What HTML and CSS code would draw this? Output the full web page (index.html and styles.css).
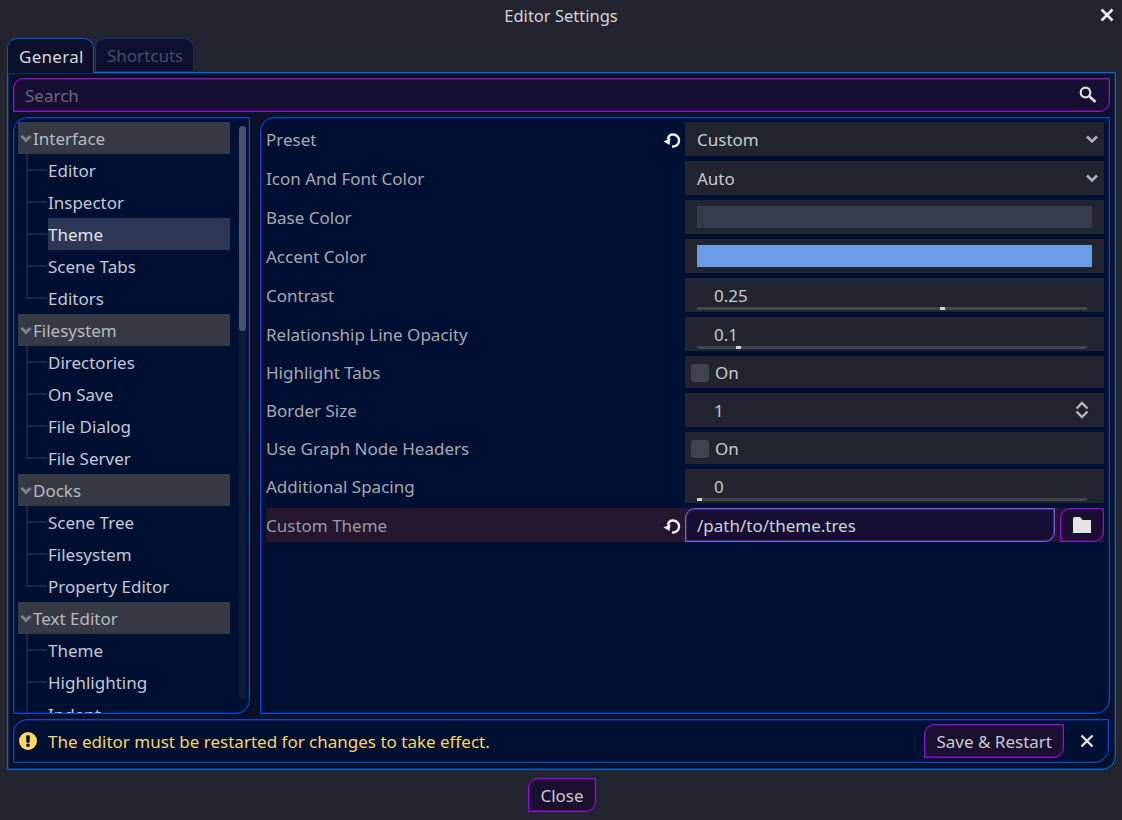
FILE: index.html
```html
<!DOCTYPE html>
<html lang="en">
<head>
  <meta charset="UTF-8">
  <meta name="viewport" content="width=device-width, initial-scale=1.0">
  <title>Editor Settings</title>
  <link rel="stylesheet" href="styles.css">
</head>
<body>
  <div class="titlebar">
    <span>Editor Settings</span>
    <svg class="title-close" width="16" height="16" viewBox="0 0 16 16"><path d="M2.5 2.5l11 11M13.5 2.5l-11 11" stroke="#f0f0f2" stroke-width="2.6" fill="none"/></svg>
  </div>

  <div class="tabs">
    <div class="tab active">General</div>
    <div class="tab">Shortcuts</div>
  </div>

  <div class="panel">
    <div class="search">
      <span>Search</span>
      <svg width="18" height="18" viewBox="0 0 18 18"><circle cx="6.500" cy="6.500" r="4.800" stroke="#e0e0e4" stroke-width="2.200" fill="none"/><path d="M10 10l6.500 6" stroke="#e0e0e4" stroke-width="2.600" fill="none"/></svg>
    </div>

    <div class="split">
      <div class="tree">
        <div class="tree-inner">
          <div class="group"><svg class="arrow" width="12" height="12" viewBox="0 0 12 12"><path d="M1.500 3L6 7.500 10.500 3" stroke="#80828c" stroke-width="3" fill="none"/></svg>Interface</div>
          <div class="leaves">
            <div class="leaf">Editor</div>
            <div class="leaf">Inspector</div>
            <div class="leaf selected">Theme</div>
            <div class="leaf">Scene Tabs</div>
            <div class="leaf">Editors</div>
          </div>
          <div class="group"><svg class="arrow" width="12" height="12" viewBox="0 0 12 12"><path d="M1.500 3L6 7.500 10.500 3" stroke="#80828c" stroke-width="3" fill="none"/></svg>Filesystem</div>
          <div class="leaves">
            <div class="leaf">Directories</div>
            <div class="leaf">On Save</div>
            <div class="leaf">File Dialog</div>
            <div class="leaf">File Server</div>
          </div>
          <div class="group"><svg class="arrow" width="12" height="12" viewBox="0 0 12 12"><path d="M1.500 3L6 7.500 10.500 3" stroke="#80828c" stroke-width="3" fill="none"/></svg>Docks</div>
          <div class="leaves">
            <div class="leaf">Scene Tree</div>
            <div class="leaf">Filesystem</div>
            <div class="leaf">Property Editor</div>
          </div>
          <div class="group"><svg class="arrow" width="12" height="12" viewBox="0 0 12 12"><path d="M1.500 3L6 7.500 10.500 3" stroke="#80828c" stroke-width="3" fill="none"/></svg>Text Editor</div>
          <div class="leaves">
            <div class="leaf">Theme</div>
            <div class="leaf">Highlighting</div>
            <div class="leaf">Indent</div>
          </div>
        </div>
        <div class="scrollbar"><div class="thumb"></div></div>
      </div>

      <div class="props">
        <div class="prop">
          <div class="prop-label">Preset
            <svg class="reset" width="18" height="18" viewBox="0 0 18 18"><path d="M5 8Q5.500 3.500 10 3.500A6 6 0 1 1 9 15.400" stroke="#eeeef0" stroke-width="2.400" fill="none"/><path d="M7.500 7L0.500 10.500 6.500 14z" fill="#eeeef0"/></svg>
          </div>
          <div class="prop-value select">Custom
            <svg width="14" height="14" viewBox="0 0 14 14"><path d="M2 3.500L7 8.500l5-5" stroke="#b0b1b6" stroke-width="2.600" fill="none"/></svg>
          </div>
        </div>
        <div class="prop">
          <div class="prop-label">Icon And Font Color</div>
          <div class="prop-value select">Auto
            <svg width="14" height="14" viewBox="0 0 14 14"><path d="M2 3.500L7 8.500l5-5" stroke="#b0b1b6" stroke-width="2.600" fill="none"/></svg>
          </div>
        </div>
        <div class="prop">
          <div class="prop-label">Base Color</div>
          <div class="prop-value swatch-wrap"><div class="swatch base"></div></div>
        </div>
        <div class="prop">
          <div class="prop-label">Accent Color</div>
          <div class="prop-value swatch-wrap"><div class="swatch accent"></div></div>
        </div>
        <div class="prop">
          <div class="prop-label">Contrast</div>
          <div class="prop-value slider">
            <span>0.25</span>
            <div class="track"><div class="handle" style="margin-left: 243px"></div></div>
          </div>
        </div>
        <div class="prop">
          <div class="prop-label">Relationship Line Opacity</div>
          <div class="prop-value slider">
            <span>0.1</span>
            <div class="track"><div class="handle" style="margin-left: 39px"></div></div>
          </div>
        </div>
        <div class="prop short">
          <div class="prop-label">Highlight Tabs</div>
          <div class="prop-value check"><div class="box"></div>On</div>
        </div>
        <div class="prop">
          <div class="prop-label">Border Size</div>
          <div class="prop-value spin">1
            <svg width="14" height="18" viewBox="0 0 14 18"><path d="M1.500 7.500L7 2l5.500 5.500M1.500 10.500L7 16l5.500-5.500" stroke="#b8b9be" stroke-width="2.300" fill="none"/></svg>
          </div>
        </div>
        <div class="prop short">
          <div class="prop-label">Use Graph Node Headers</div>
          <div class="prop-value check"><div class="box"></div>On</div>
        </div>
        <div class="prop">
          <div class="prop-label">Additional Spacing</div>
          <div class="prop-value slider">
            <span>0</span>
            <div class="track"><div class="handle" style="margin-left: 0"></div></div>
          </div>
        </div>
        <div class="prop changed">
          <div class="prop-label">Custom Theme
            <svg class="reset" width="18" height="18" viewBox="0 0 18 18"><path d="M5 8Q5.500 3.500 10 3.500A6 6 0 1 1 9 15.400" stroke="#eeeef0" stroke-width="2.400" fill="none"/><path d="M7.500 7L0.500 10.500 6.500 14z" fill="#eeeef0"/></svg>
          </div>
          <div class="path-row">
            <div class="path-input">/path/to/theme.tres</div>
            <div class="folder-btn">
              <svg width="18" height="16" viewBox="0 0 18 16"><path d="M0 1.500Q0 0 1.500 0H7l2.500 3H18v13H0z" fill="#e4e4e6"/></svg>
            </div>
          </div>
        </div>
      </div>
    </div>

    <div class="notice">
      <svg width="18" height="18" viewBox="0 0 18 18"><circle cx="9" cy="9" r="9" fill="#ffd766"/><rect x="7.300" y="3.200" width="3.400" height="7.500" rx="1" fill="#001033"/><circle cx="9" cy="13.200" r="1.800" fill="#001033"/></svg>
      <span class="notice-text">The editor must be restarted for changes to take effect.</span>
      <div class="btn save">Save &amp; Restart</div>
      <svg class="notice-close" width="14" height="14" viewBox="0 0 14 14"><path d="M1.500 1.500l11 11M12.500 1.500l-11 11" stroke="#e4e4e6" stroke-width="2.400" fill="none"/></svg>
    </div>
  </div>

  <div class="footer">
    <div class="btn close">Close</div>
  </div>
</body>
</html>
```

FILE: styles.css
```css
html, body {
  margin: 0;
  padding: 0;
  height: 820px;
  overflow: hidden;
}

* {
  box-sizing: border-box;
}

body {
  background-color: #22252f;
  font-family: "Noto Sans", sans-serif;
  font-size: 17px;
  color: #c8cad0;
}

.titlebar {
  height: 32px;
  padding-bottom: 1px;
  display: flex;
  align-items: center;
  justify-content: center;
  position: relative;
  font-size: 16.5px;
  color: #d4d5d9;
}

.title-close {
  position: absolute;
  right: 7px;
  top: 7px;
}

.tabs {
  display: flex;
  gap: 1px;
  margin: 6px 0 -1px 7px;
  height: 35px;
}

.tab {
  width: 99px;
  height: 34px;
  padding: 0 0 0 11px;
  display: flex;
  align-items: center;
  background: #0f1030;
  color: #4a4d68;
  border: 1px solid #12306e;
  border-radius: 10px 10px 0 0;
}

.tab.active {
  width: 87px;
  height: 35px;
  position: relative;
  letter-spacing: 0.3px;
  background: #0d1029;
  color: #d6d8de;
  border-color: #0a50e0;
  border-bottom: none;
}

.panel {
  width: 1109px;
  height: 698px;
  margin-left: 7px;
  padding: 5px;
  background: #0d1029;
  border: 1px solid #0a6ad8;
  border-radius: 0 0 14px 0;
  box-shadow: inset 0 0 0 1px rgba(10, 106, 216, 0.3);
  display: flex;
  flex-direction: column;
}

.search {
  width: 1097px;
  height: 34px;
  flex: none;
  padding: 0 12px 0 11px;
  display: flex;
  align-items: center;
  justify-content: space-between;
  background: #180e33;
  color: #6a6878;
  border: 1px solid #9010d8;
  border-radius: 10px 0 10px 0;
  box-shadow: inset 0 0 0 1px rgba(144, 16, 216, 0.35);
}

.split {
  display: flex;
  gap: 10px;
  margin-top: 5px;
  height: 597px;
  flex: none;
}

.tree {
  width: 237px;
  flex: none;
  position: relative;
  background: #001033;
  border: 1px solid #0a48d8;
  border-radius: 14px 0 14px 0;
  box-shadow: inset 0 0 0 1px rgba(10, 72, 216, 0.3);
  overflow: hidden;
}

.tree-inner {
  padding: 4px 0 0 4px;
  width: 216px;
  color: #c5c8d2;
}

.group {
  height: 32px;
  display: flex;
  align-items: center;
  background: #373a45;
  color: #b8bac2;
  padding: 1px 0 0 15px;
  position: relative;
}

.arrow {
  position: absolute;
  left: 2px;
  top: 11px;
}

.leaf {
  height: 32px;
  margin-left: 30px;
  padding-top: 1px;
  display: flex;
  align-items: center;
  position: relative;
}

.leaf::before {
  content: "";
  position: absolute;
  left: -22px;
  top: 15px;
  width: 21px;
  height: 2px;
  background: #1a2644;
}

.leaf::after {
  content: "";
  position: absolute;
  left: -22px;
  top: -16px;
  width: 2px;
  height: 32px;
  background: #1a2644;
}

.leaf:first-child::after {
  top: 0;
  height: 16px;
}

.leaf.selected {
  background: #2d3654;
  color: #e2e4ea;
}

.scrollbar {
  position: absolute;
  left: 225px;
  top: 8px;
  width: 7px;
  height: 574px;
  background: #0d1a3c;
  border-radius: 4px;
}

.thumb {
  height: 205px;
  background: #4a5270;
  border-radius: 4px;
}

.props {
  width: 850px;
  flex: none;
  padding: 4px 5px 0 5px;
  background: #001033;
  border: 1px solid #0a48d8;
  border-radius: 14px 0 14px 0;
  box-shadow: inset 0 0 0 1px rgba(10, 72, 216, 0.3);
  display: flex;
  flex-direction: column;
  gap: 5px;
}

.prop {
  height: 34px;
  display: flex;
  flex: none;
}

.prop.short {
  height: 32px;
}

.prop-label {
  width: 419px;
  flex: none;
  padding: 1px 4px 0 0;
  display: flex;
  align-items: center;
  justify-content: space-between;
  color: #a6a8b0;
}

.prop-value {
  width: 419px;
  padding-top: 1px;
  background: #22252f;
  display: flex;
  align-items: center;
}

.select {
  padding: 1px 5px 0 12px;
  justify-content: space-between;
}

.swatch-wrap {
  padding: 0 12px;
}

.swatch {
  width: 100%;
  height: 22px;
}

.swatch.base {
  background: #343b4e;
}

.swatch.accent {
  background: #6b9ce8;
}

.slider {
  flex-direction: column;
  align-items: flex-start;
  padding: 6px 0 0 12px;
}

.slider span {
  padding-left: 17px;
  line-height: 24px;
  height: 23px;
}

.track {
  width: 390px;
  height: 3px;
  background: #43464f;
}

.handle {
  width: 5px;
  height: 3px;
  background: #d4d4d6;
}

.check {
  padding-left: 6px;
}

.box {
  width: 18px;
  height: 18px;
  margin-right: 6px;
  background: #41444f;
  border-radius: 3px;
}

.spin {
  padding: 0 15px 0 29px;
  justify-content: space-between;
}

.changed {
  background: #26162f;
}

.changed .prop-label {
  color: #9a9aa6;
}

.path-row {
  width: 419px;
  display: flex;
  gap: 5px;
}

.path-input {
  width: 370px;
  padding: 1px 0 0 11px;
  display: flex;
  align-items: center;
  background: #180e33;
  border: 1px solid #7460e8;
  border-radius: 10px 0 10px 0;
  box-shadow: inset 0 0 0 1px rgba(116, 96, 232, 0.35);
  color: #d0d0d8;
}

.folder-btn {
  width: 44px;
  display: flex;
  align-items: center;
  justify-content: center;
  background: #1a0f33;
  border: 1px solid #9010d8;
  border-radius: 10px 0 10px 0;
  box-shadow: inset 0 0 0 1px rgba(144, 16, 216, 0.35);
}

.notice {
  width: 1096px;
  height: 44px;
  margin-top: 5px;
  padding: 0 14px 0 5px;
  flex: none;
  display: flex;
  align-items: center;
  background: #001033;
  border: 1px solid #0a48d8;
  border-radius: 14px 0 14px 0;
  box-shadow: inset 0 0 0 1px rgba(10, 72, 216, 0.3);
}

.notice-text {
  margin-left: 11px;
  padding-top: 1px;
  color: #f5d565;
  flex: 1;
}

.btn {
  height: 34px;
  padding: 1px 11px 0;
  display: flex;
  align-items: center;
  justify-content: center;
  background: #1c1030;
  color: #c8cad0;
  border: 1px solid #9010d8;
  border-radius: 10px 0 10px 0;
  box-shadow: inset 0 0 0 1px rgba(144, 16, 216, 0.35);
}

.close {
  width: 68px;
}

.notice-close {
  margin-left: 16px;
}

.footer {
  margin-top: 8px;
  padding-left: 2px;
  display: flex;
  justify-content: center;
}
```
